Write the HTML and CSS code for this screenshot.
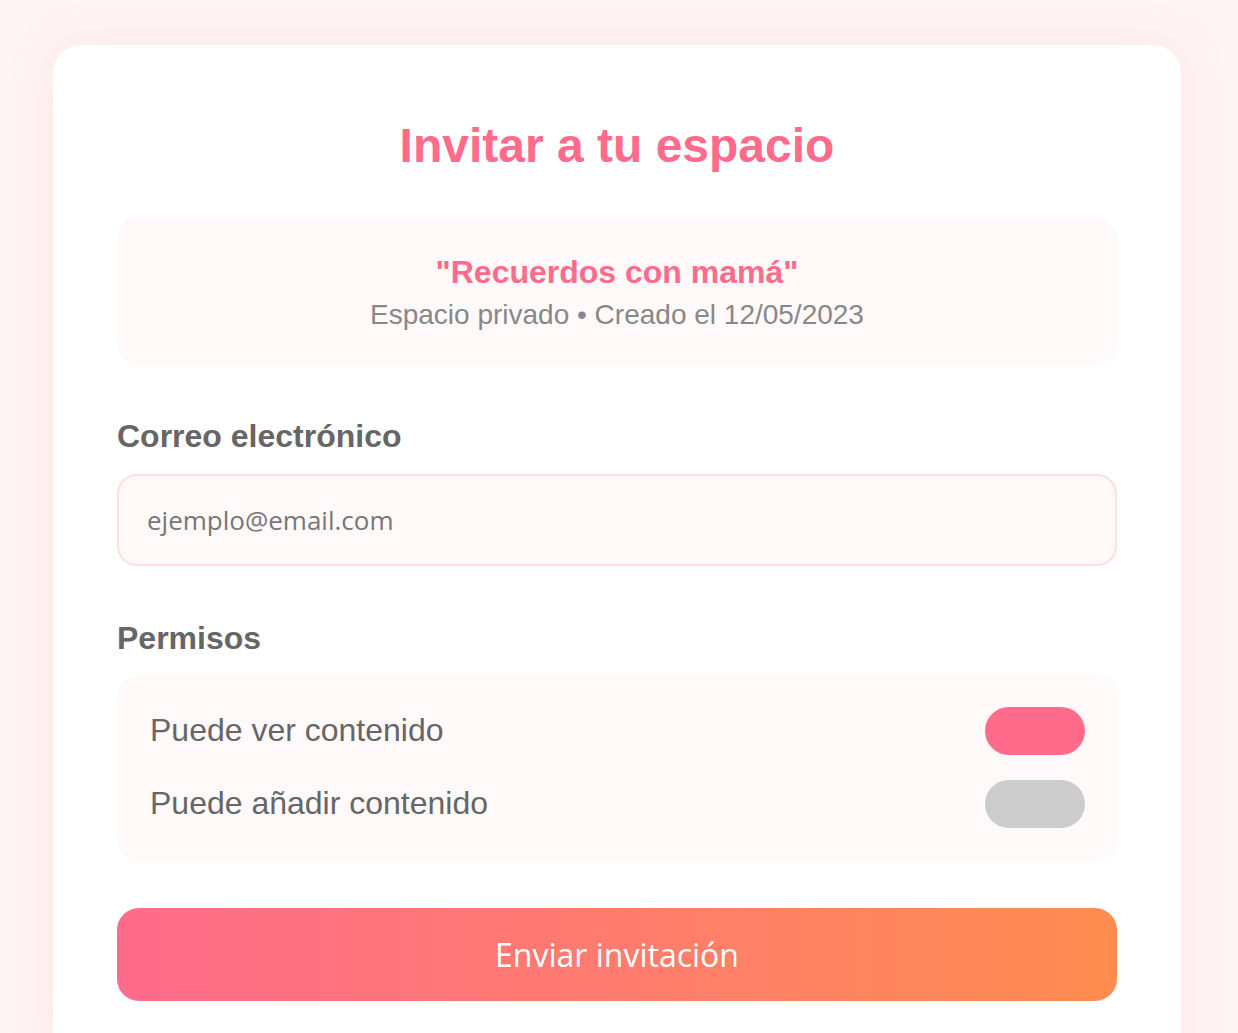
FILE: index.html
```html
<!DOCTYPE html>
<html lang="es">
<head>
<meta charset="utf-8">
<title>Invitar a tu espacio</title>
<link rel="stylesheet" href="styles.css">
</head>
<body>
<main class="card">
  <h1 class="title">Invitar a tu espacio</h1>
  <section class="space-info">
    <h2 class="space-name">"Recuerdos con mamá"</h2>
    <p class="space-meta">Espacio privado • Creado el 12/05/2023</p>
  </section>
  <div class="field">
    <label class="label" for="email">Correo electrónico</label>
    <input class="input" id="email" type="email" placeholder="ejemplo@email.com">
  </div>
  <div class="field field-perms">
    <div class="label">Permisos</div>
    <div class="perms">
      <div class="perm-row">
        <span class="perm-text">Puede ver contenido</span>
        <span class="toggle on"></span>
      </div>
      <div class="perm-row">
        <span class="perm-text">Puede añadir contenido</span>
        <span class="toggle"></span>
      </div>
    </div>
  </div>
  <button class="send" type="button">Enviar invitación</button>
</main>
</body>
</html>
```
FILE: styles.css
```css
html, body {
  margin: 0;
  padding: 0;
  background: #fff5f5;
  font-family: "Liberation Sans", Arial, sans-serif;
}
body {
  padding: 45px 0 0 53px;
  height: 1033px;
  box-sizing: border-box;
  overflow: hidden;
}
.card {
  width: 1128px;
  box-sizing: border-box;
  background: #ffffff;
  border-radius: 28px;
  padding: 72px 64px 64px;
  box-shadow: 0 0 40px rgba(255, 182, 182, 0.25);
}
.title {
  margin: 0 0 41px;
  text-align: center;
  color: #ff6b8b;
  font-size: 48px;
  font-weight: 700;
  line-height: 1.2;
}
.space-info {
  background: #fff9f9;
  border-radius: 22px;
  padding: 37px 20px 32px;
  text-align: center;
}
.space-name {
  margin: 0 0 7px;
  color: #ff6b8b;
  font-size: 32px;
  font-weight: 700;
  line-height: 1.2;
}
.space-meta {
  margin: 0 0 1px;
  color: #888888;
  font-size: 28px;
  line-height: 1.2;
}
.field {
  margin-top: 53px;
}
.field-perms {
  margin-top: 54px;
}
.label {
  display: block;
  color: #666666;
  font-size: 32px;
  font-weight: 700;
  margin-bottom: 19px;
}
.field-perms .label {
  margin-bottom: 18px;
}
.input {
  display: block;
  width: 100%;
  box-sizing: border-box;
  height: 92px;
  padding: 0 28px;
  border: 2px solid #ffe0e0;
  border-radius: 20px;
  background: #fff9f9;
  font-family: "Open Sans", "Noto Sans", sans-serif;
  font-size: 26px;
  color: #555555;
  outline: none;
}
.input::placeholder {
  color: #777777;
}
.perms {
  background: #fff9f9;
  border-radius: 22px;
  padding: 32px 32px 33px 33px;
  display: flex;
  flex-direction: column;
  gap: 25px;
}
.perm-row {
  display: flex;
  align-items: center;
  justify-content: space-between;
}
.perm-text {
  color: #666666;
  font-size: 32px;
}
.toggle {
  width: 100px;
  height: 48px;
  border-radius: 24px;
  background: #cccccc;
}
.toggle.on {
  background: #ff6b8b;
}
.send {
  display: block;
  width: 100%;
  height: 93px;
  margin-top: 47px;
  border: none;
  border-radius: 22px;
  background: linear-gradient(90deg, #ff6b8b, #ff8c50);
  color: #ffffff;
  font-family: "Open Sans", "Noto Sans", sans-serif;
  font-size: 32px;
  font-weight: 500;
  cursor: pointer;
}
```
